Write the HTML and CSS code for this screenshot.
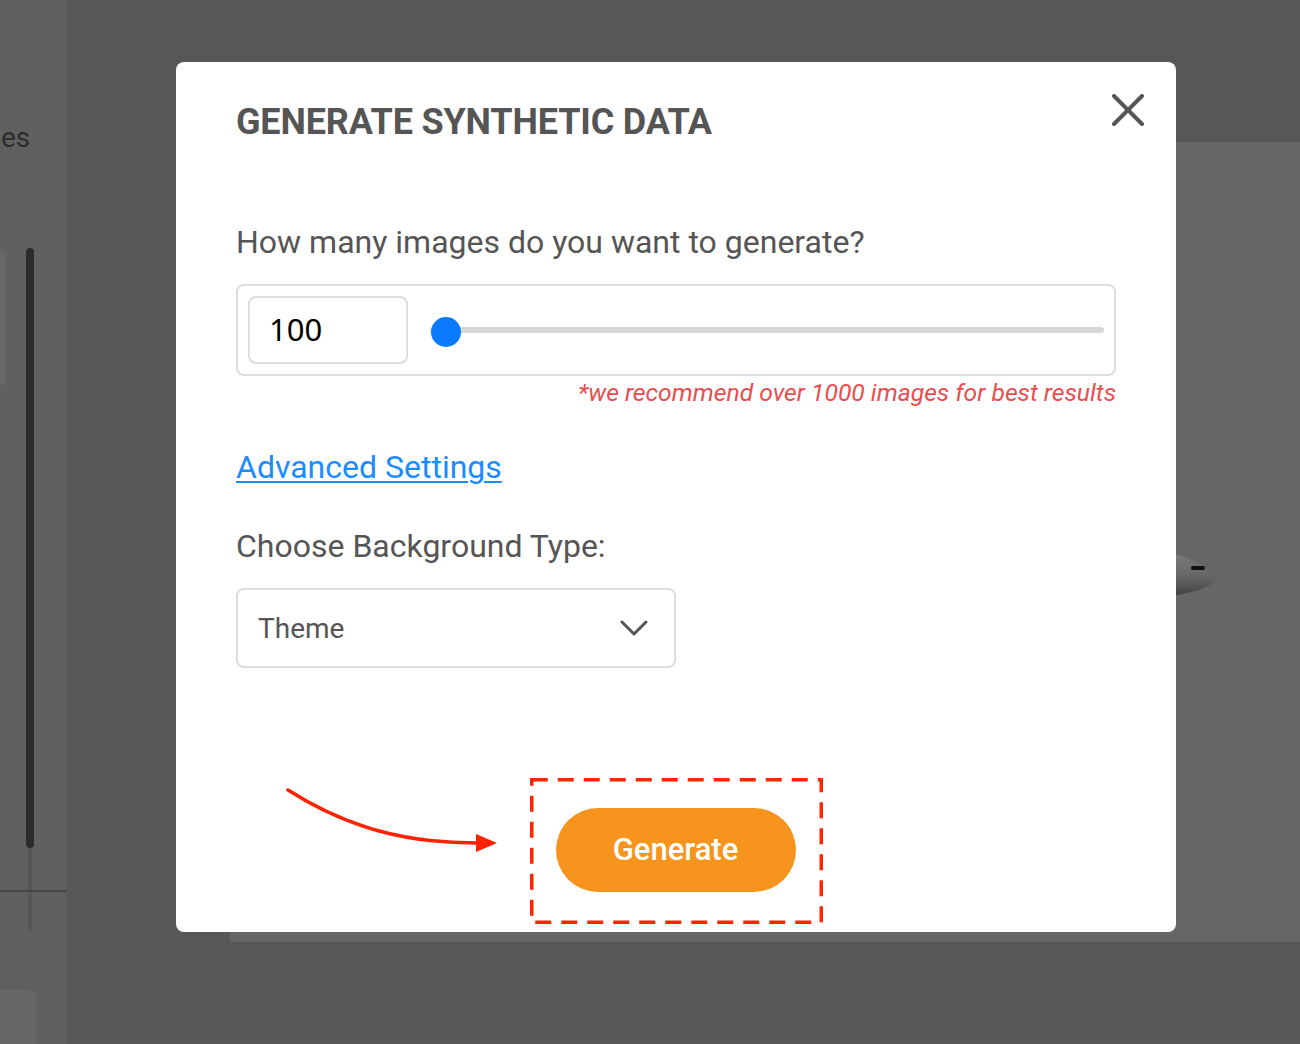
FILE: index.html
```html
<!DOCTYPE html>
<html lang="en">
<head>
<meta charset="utf-8">
<title>Generate Synthetic Data</title>
<link rel="stylesheet" href="styles.css">
</head>
<body>
<div class="app">
  <aside class="sidebar">
    <div class="side-label">es</div>
    <div class="side-body">
      <div class="side-card"></div>
      <div class="side-scroll">
        <div class="scroll-thumb"></div>
        <div class="scroll-track"></div>
      </div>
    </div>
    <div class="side-rule"></div>
    <div class="side-bottom-card"></div>
  </aside>
  <main class="main">
    <div class="main-top"></div>
    <section class="panel">
      <svg class="plane" width="150" height="150" viewBox="0 0 150 150" aria-hidden="true">
        <defs>
          <linearGradient id="noseGrad" x1="0" y1="0" x2="0" y2="1">
            <stop offset="0" stop-color="#7a7a7a"/>
            <stop offset="0.45" stop-color="#6a6a6a"/>
            <stop offset="0.75" stop-color="#555555"/>
            <stop offset="1" stop-color="#3c3c3c"/>
          </linearGradient>
        </defs>
        <path d="M0 52 L100 54 C118 60 136 70 141 78 C138 86 120 92 100 95 L0 98 Z" fill="url(#noseGrad)"/>
        <rect x="115" y="66" width="14" height="4" rx="2" fill="#111"/>
      </svg>
    </section>
  </main>
</div>

<div class="modal" role="dialog" aria-labelledby="modal-title">
  <button class="close-btn" aria-label="Close">
    <svg width="32" height="32" viewBox="0 0 32 32"><path d="M2 2 L30 30 M30 2 L2 30" stroke="#555" stroke-width="4" stroke-linecap="round" fill="none"/></svg>
  </button>
  <h1 class="modal-title" id="modal-title">GENERATE SYNTHETIC DATA</h1>

  <p class="field-label q-label">How many images do you want to generate?</p>
  <div class="count-box">
    <div class="count-input">100</div>
    <div class="range-track"><div class="range-thumb"></div></div>
  </div>
  <p class="note">*we recommend over 1000 images for best results</p>

  <a class="adv-link" href="#">Advanced Settings</a>

  <p class="field-label bg-label">Choose Background Type:</p>
  <div class="select-box">
    <span class="select-value">Theme</span>
    <svg class="chevron" width="28" height="16" viewBox="0 0 28 16"><path d="M2 2 L14 14 L26 2" stroke="#555" stroke-width="3" stroke-linecap="round" stroke-linejoin="round" fill="none"/></svg>
  </div>

  <div class="highlight">
    <svg class="dash-frame" width="293" height="146" viewBox="0 0 293 146" aria-hidden="true"><rect x="1.75" y="1.75" width="289.5" height="142.5" fill="none" stroke="#ff2400" stroke-width="3.5" stroke-dasharray="16 10"/></svg>
    <button class="generate-btn">Generate</button>
  </div>

  <svg class="pointer-arrow" width="240" height="80" viewBox="0 0 240 80" aria-hidden="true">
    <path d="M12 8 C70 45 130 62 206 61" stroke="#ff2200" stroke-width="3.5" fill="none" stroke-linecap="round"/>
    <polygon points="200,52 221,61 200,70" fill="#ff2200"/>
  </svg>
</div>
</body>
</html>
```

FILE: styles.css
```css
* { box-sizing: border-box; }

html, body {
  margin: 0;
  padding: 0;
  width: 1300px;
  height: 1044px;
  overflow: hidden;
  background: #575757;
  font-family: Roboto, "Liberation Sans", Arial, sans-serif;
}

.app {
  display: flex;
  width: 1300px;
  height: 1044px;
}

/* ---------- left sidebar ---------- */
.sidebar {
  position: relative;
  width: 66px;
  height: 1044px;
  background: #606060;
  display: flex;
  flex-direction: column;
  flex-shrink: 0;
}

.side-label {
  margin-top: 118px;
  height: 40px;
  line-height: 40px;
  font-size: 28px;
  color: #2c2c2c;
  margin-left: 1px;
}

.side-body {
  margin-top: 90px;
  display: flex;
  align-items: flex-start;
}

.side-card {
  width: 6px;
  height: 135px;
  margin-top: 2px;
  background: #676767;
  border-radius: 0 8px 8px 0;
}

.side-scroll {
  margin-left: 20px;
  width: 8px;
  display: flex;
  flex-direction: column;
}

.scroll-thumb {
  width: 8px;
  height: 600px;
  background: #2b2b2b;
  border-radius: 4px;
}

.scroll-track {
  width: 4px;
  height: 84px;
  margin-left: 2px;
  background: #575757;
  border-radius: 0 0 2px 2px;
}

.side-rule {
  position: absolute;
  left: 0;
  top: 890px;
  width: 66px;
  height: 2px;
  background: #464646;
}

.side-bottom-card {
  margin-top: 58px;
  width: 36px;
  height: 60px;
  background: #676767;
  border-radius: 0 8px 0 0;
}

/* ---------- main ---------- */
.main {
  flex: 1;
  display: flex;
  flex-direction: column;
}

.main-top {
  height: 142px;
  background: #575757;
}

.panel {
  position: relative;
  margin-left: 164px;
  height: 800px;
  background: #666666;
  overflow: hidden;
}

.plane {
  position: absolute;
  left: 846px;
  top: 358px;
}

/* ---------- modal ---------- */
.modal {
  position: fixed;
  left: 176px;
  top: 62px;
  width: 1000px;
  height: 870px;
  background: #ffffff;
  border-radius: 8px;
  padding: 0 60px;
  display: flex;
  flex-direction: column;
}

.close-btn {
  position: absolute;
  top: 32px;
  right: 32px;
  width: 32px;
  height: 32px;
  padding: 0;
  border: 0;
  background: transparent;
  display: block;
}
.close-btn svg { display: block; }

.modal-title {
  margin: 42px 0 0;
  font-size: 36px;
  line-height: 36px;
  font-weight: 700;
  color: #555555;
  letter-spacing: -0.17px;
}

.field-label {
  margin: 0;
  font-size: 32px;
  line-height: 32px;
  color: #555555;
  font-weight: 400;
}

.q-label { margin-top: 86px; }

.count-box {
  margin-top: 26px;
  height: 92px;
  border: 2px solid #dddddd;
  border-radius: 8px;
  padding: 0 10px;
  display: flex;
  align-items: center;
  gap: 22px;
}

.count-input {
  width: 160px;
  height: 68px;
  border: 2px solid #dddddd;
  border-radius: 8px;
  padding-left: 19px;
  padding-bottom: 3px;
  display: flex;
  align-items: center;
  font-family: "Noto Sans", "Open Sans", sans-serif;
  font-size: 31px;
  color: #000000;
}

.range-track {
  flex: 1;
  position: relative;
  height: 6px;
  background: #d6d6d6;
  border-radius: 3px;
}

.range-thumb {
  position: absolute;
  left: 1px;
  top: -10px;
  width: 30px;
  height: 30px;
  border-radius: 50%;
  background: #0a7bff;
}

.note {
  margin: 2px 0 0;
  text-align: right;
  font-size: 24.7px;
  line-height: 30px;
  font-style: italic;
  color: #ea4d4f;
}

.adv-link {
  margin-top: 43px;
  align-self: flex-start;
  font-size: 32px;
  line-height: 32px;
  color: #1b8cff;
  text-decoration: underline;
  text-underline-offset: 3px;
  text-decoration-thickness: 2px;
}

.bg-label { margin-top: 47px; }

.select-box {
  margin-top: 26px;
  width: 440px;
  height: 80px;
  border: 2px solid #dddddd;
  border-radius: 8px;
  padding: 0 26px 0 20px;
  display: flex;
  align-items: center;
  justify-content: space-between;
}

.select-value {
  font-size: 28px;
  color: #555555;
}

.chevron { display: block; }

.highlight {
  position: relative;
  margin-top: 110px;
  align-self: center;
  width: 293px;
  height: 146px;
  padding: 30px 27px 32px 26px;
  display: flex;
}

.dash-frame {
  position: absolute;
  left: 0;
  top: 0;
}

.generate-btn {
  width: 240px;
  height: 84px;
  border: 0;
  border-radius: 42px;
  background: #f7941d;
  color: #ffffff;
  font-family: Roboto, "Liberation Sans", Arial, sans-serif;
  font-size: 31px;
  font-weight: 500;
  padding: 0 0 2px;
}

.pointer-arrow {
  position: absolute;
  left: 100px;
  top: 720px;
}
```
